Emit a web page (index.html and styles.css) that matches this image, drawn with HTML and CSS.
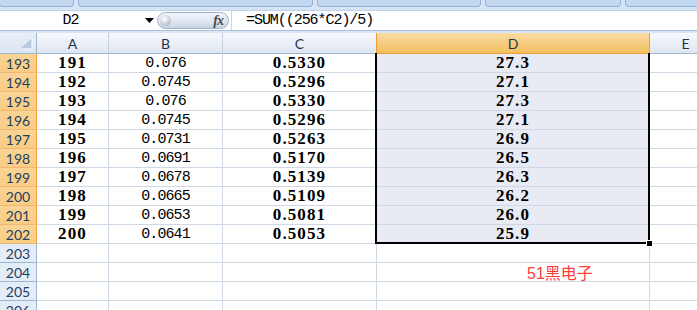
FILE: index.html
```html
<!DOCTYPE html>
<html>
<head>
<meta charset="utf-8">
<link rel="stylesheet" href="styles.css">
</head>
<body>
<div class="ribbon">
  <div class="rbtn w1"></div>
  <div class="rbtn w2"></div>
  <div class="rbtn w3"></div>
  <div class="rbtn w4"></div>
  <div class="rbtn w5"></div>
</div>
<div class="fbar">
  <div class="namebox">D2</div>
  <div class="nb-arrow"><svg width="9" height="5" viewBox="0 0 9 5"><polygon points="0,0 9,0 4.5,5" fill="#000"/></svg></div>
  <div class="pill"><span class="ball"></span><span class="fx">fx</span></div>
  <div class="formula">=SUM((256*C2)/5)</div>
</div>
<div class="fbar-gap"></div>
<div class="sheet">
  <div class="grid">
    <div class="corner"><svg width="14" height="12" viewBox="0 0 14 12"><polygon points="13,0 13,11 1,11" fill="#b9cbe3"/><polyline points="13,0 13,11 1,11" fill="none" stroke="#fff" stroke-width="1"/></svg></div>
    <div class="ch">A</div>
    <div class="ch">B</div>
    <div class="ch ch-c">C</div>
    <div class="ch ch-sel">D</div>
    <div class="ch">E</div>

    <div class="rh rh-sel">193</div><div class="c a">191</div><div class="c b">0.076</div><div class="c cc">0.5330</div><div class="c d">27.3</div><div class="c e"></div>
    <div class="rh rh-sel">194</div><div class="c a">192</div><div class="c b">0.0745</div><div class="c cc">0.5296</div><div class="c d">27.1</div><div class="c e"></div>
    <div class="rh rh-sel">195</div><div class="c a">193</div><div class="c b">0.076</div><div class="c cc">0.5330</div><div class="c d">27.3</div><div class="c e"></div>
    <div class="rh rh-sel">196</div><div class="c a">194</div><div class="c b">0.0745</div><div class="c cc">0.5296</div><div class="c d">27.1</div><div class="c e"></div>
    <div class="rh rh-sel">197</div><div class="c a">195</div><div class="c b">0.0731</div><div class="c cc">0.5263</div><div class="c d">26.9</div><div class="c e"></div>
    <div class="rh rh-sel">198</div><div class="c a">196</div><div class="c b">0.0691</div><div class="c cc">0.5170</div><div class="c d">26.5</div><div class="c e"></div>
    <div class="rh rh-sel">199</div><div class="c a">197</div><div class="c b">0.0678</div><div class="c cc">0.5139</div><div class="c d">26.3</div><div class="c e"></div>
    <div class="rh rh-sel">200</div><div class="c a">198</div><div class="c b">0.0665</div><div class="c cc">0.5109</div><div class="c d">26.2</div><div class="c e"></div>
    <div class="rh rh-sel">201</div><div class="c a">199</div><div class="c b">0.0653</div><div class="c cc">0.5081</div><div class="c d">26.0</div><div class="c e"></div>
    <div class="rh rh-sel">202</div><div class="c a">200</div><div class="c b">0.0641</div><div class="c cc">0.5053</div><div class="c d">25.9</div><div class="c e"></div>

    <div class="rh">203</div><div class="c"></div><div class="c"></div><div class="c"></div><div class="c"></div><div class="c e"></div>
    <div class="rh">204</div><div class="c"></div><div class="c"></div><div class="c"></div><div class="c note">51黑电子</div><div class="c e"></div>
    <div class="rh">205</div><div class="c"></div><div class="c"></div><div class="c"></div><div class="c"></div><div class="c e"></div>
    <div class="rh">206</div><div class="c"></div><div class="c"></div><div class="c"></div><div class="c"></div><div class="c e"></div>
  </div>
  <div class="sel"></div>
  <div class="handle"></div>
</div>
</body>
</html>
```

FILE: styles.css
```css
html, body {
  margin: 0;
  padding: 0;
  width: 697px;
  height: 310px;
  overflow: hidden;
  background: #fff;
  font-family: "Liberation Sans", Arial, sans-serif;
}

.ribbon {
  height: 11px;
  background: #d5e3f5;
  display: flex;
  gap: 4px;
  box-sizing: border-box;
  border-bottom: 1px solid #c0d3ec;
}
.rbtn {
  height: 7px;
  box-sizing: border-box;
  background: #c3d8f1;
  border: 1px solid #90b1dc;
  border-top: none;
  border-radius: 0 0 4px 4px;
}
.w1 { width: 75px; margin-left: -1px; }
.w2 { width: 235px; }
.w3 { width: 164px; }
.w4 { width: 136px; }
.w5 { flex: 1; margin-right: -4px; }

.fbar {
  height: 19px;
  background: #fff;
  display: flex;
  align-items: center;
  border-bottom: 1px solid #a7bfdd;
}
.namebox {
  width: 141px;
  text-align: center;
  font-family: "Liberation Mono", monospace;
  font-size: 15px;
  letter-spacing: -1px;
  color: #000;
}
.nb-arrow {
  width: 16px;
  display: flex;
  align-items: center;
  justify-content: center;
  height: 19px;
}
.pill {
  width: 72px;
  height: 17px;
  box-sizing: border-box;
  border: 1px solid #9db0c9;
  border-radius: 9px;
  background: linear-gradient(#f3f6fa, #dfe6f0 55%, #c8d4e4);
  display: flex;
  align-items: center;
  justify-content: space-between;
  padding: 0 3px 0 2px;
}
.ball {
  width: 11px;
  height: 11px;
  border-radius: 50%;
  background: radial-gradient(circle at 40% 35%, #ffffff, #c9cfd8 55%, #9aa3b0);
}
.fx {
  font-family: "Liberation Serif", serif;
  font-style: italic;
  font-weight: bold;
  font-size: 14px;
  color: #4a4a4a;
  letter-spacing: -1px;
  padding-right: 2px;
}
.formula {
  margin-left: 2px;
  border-left: 1px solid #c5d4e8;
  height: 19px;
  line-height: 19px;
  padding-left: 14px;
  font-family: "Liberation Mono", monospace;
  font-size: 15px;
  letter-spacing: -1.05px;
  color: #000;
}
.fbar-gap {
  height: 2px;
  background: #dbe6f4;
}

.sheet {
  position: relative;
}
.grid {
  display: grid;
  grid-template-columns: 37px 72px 114px 154px 273px 72px;
  grid-auto-rows: 19px;
  grid-template-rows: 21px;
}
.grid > div {
  box-sizing: border-box;
  display: flex;
  align-items: center;
  justify-content: center;
  overflow: hidden;
  white-space: nowrap;
}

.corner {
  background: linear-gradient(#e9eff7, #dbe5f1);
  border-right: 1px solid #9eb6ce;
  border-bottom: 1px solid #9eb6ce;
  justify-content: flex-end !important;
  align-items: flex-end !important;
  padding: 0 3px 3px 0;
}
.ch {
  background: linear-gradient(#f7f9fc, #e9eef5 60%, #dde5ef);
  border-right: 1px solid #c3d1e2;
  border-bottom: 1px solid #9eb6ce;
  font-family: Lato, "Liberation Sans", sans-serif;
  font-size: 14px;
  color: #1d3550;
}
.ch-c { border-right-color: #f29b3a; }
.ch-sel {
  background: linear-gradient(#f9dba3, #f6cd82 50%, #f1bf5d);
  border-right: 1px solid #f29b3a;
  border-bottom: 1px solid #f29b3a;
}

.rh {
  background: #e4ecf7;
  border-right: 1px solid #9eb6ce;
  border-bottom: 1px solid #9eb6ce;
  font-family: Lato, "Liberation Sans", sans-serif;
  font-size: 14px;
  color: #243f5e;
}
.rh-sel {
  background: linear-gradient(#f9d495, #f8cc84);
  border-right-color: #f29b3a;
  border-bottom-color: #f0b772;
}

.c {
  border-right: 1px solid #d0d7e5;
  border-bottom: 1px solid #d0d7e5;
  color: #000;
}
.a, .cc, .d {
  font-family: "Liberation Serif", serif;
  font-weight: bold;
  font-size: 17px;
  letter-spacing: 1.1px;
}
.b {
  font-family: "Liberation Mono", monospace;
  font-size: 15px;
  letter-spacing: -0.9px;
  color: #000;
}
.d {
  background: #e8eaf4;
}
.e {
  border-right: none;
}
.note {
  justify-content: flex-start !important;
  padding-left: 150px;
  font-family: "Liberation Sans", "Noto Sans CJK SC", sans-serif;
  font-size: 16px;
  color: #ff3c3c;
}

.sel {
  position: absolute;
  left: 375px;
  top: 20px;
  width: 275px;
  height: 191px;
  box-sizing: border-box;
  border: 2px solid #000;
  border-top: none;
}
.handle {
  position: absolute;
  left: 646px;
  top: 207px;
  width: 5px;
  height: 5px;
  background: #000;
  border: 1px solid #fff;
}
```
